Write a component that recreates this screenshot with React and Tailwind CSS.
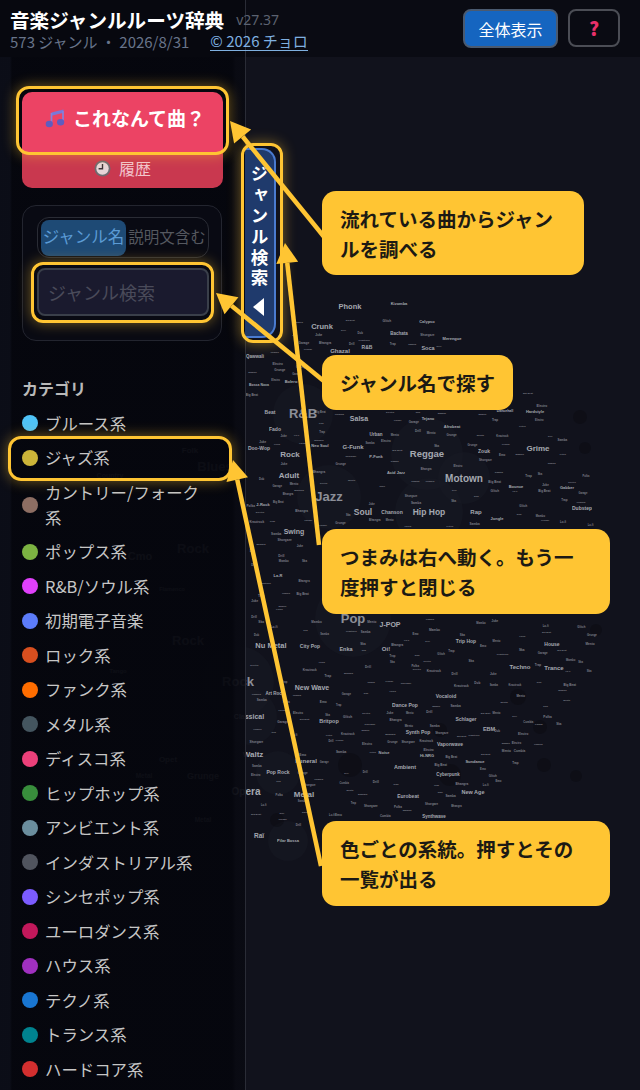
const font = '"Noto Sans CJK JP", "Noto Sans", sans-serif';

const categories = [
  ['ブルース系', 'bg-[#4fc3f7]'],
  ['ジャズ系', 'bg-[#cdb539]'],
  ['カントリー/フォーク系', 'bg-[#8d6e63]'],
  ['ポップス系', 'bg-[#7cb342]'],
  ['R&B/ソウル系', 'bg-[#e040fb]'],
  ['初期電子音楽', 'bg-[#5c7cfa]'],
  ['ロック系', 'bg-[#d84f1f]'],
  ['ファンク系', 'bg-[#ff6d00]'],
  ['メタル系', 'bg-[#44555f]'],
  ['ディスコ系', 'bg-[#ec407a]'],
  ['ヒップホップ系', 'bg-[#388e3c]'],
  ['アンビエント系', 'bg-[#6b8e9e]'],
  ['インダストリアル系', 'bg-[#50545e]'],
  ['シンセポップ系', 'bg-[#7c5cff]'],
  ['ユーロダンス系', 'bg-[#c2185b]'],
  ['ハウス系', 'bg-[#a030c0]'],
  ['テクノ系', 'bg-[#1976d2]'],
  ['トランス系', 'bg-[#00838f]'],
  ['ハードコア系', 'bg-[#d32f2f]'],
];

// name, center x, center y, font size
const genres = [
  ['Phonk', 350, 307, 7.5], ['Kizomba', 399, 304, 4], ['Calypso', 427, 322, 4], ['Crunk', 322, 327, 7.5],
  ['Bachata', 399, 334, 4.5], ['Merengue', 452, 339, 4], ['Ghazal', 340, 351, 6], ['R&B', 367, 348, 5],
  ['Soca', 428, 348, 5.5], ['Qawwali', 255, 357, 4.5], ['Bolero', 291, 382, 4], ['Bossa Nova', 259, 386, 3.5],
  ['R&B', 303, 414, 13], ['Beat', 270, 413, 5], ['Salsa', 359, 419, 7], ['Fado', 275, 430, 5],
  ['Urban', 376, 435, 4.5], ['Doo-Wop', 259, 449, 5], ['Rock', 290, 455, 8], ['G-Funk', 353, 447, 6],
  ['Neo Soul', 320, 446, 4], ['Reggae', 427, 454, 9.5], ['Adult', 289, 476, 8], ['Zouk', 484, 452, 5],
  ['Grime', 538, 449, 8], ['Motown', 464, 478, 10], ['Jazz', 329, 497, 13], ['Soul', 363, 512, 8.5],
  ['Chanson', 392, 513, 5], ['Hip Hop', 429, 512, 8.5], ['Rap', 476, 512, 6], ['Swing', 294, 532, 7],
  ['Dubstep', 582, 509, 5], ['Bounce', 516, 487, 4], ['Gabber', 567, 488, 4], ['Hardstyle', 535, 412, 4],
  ['Afrobeat', 452, 427, 4], ['Tejano', 428, 419, 4], ['Dancehall', 505, 412, 3.5], ['Jungle', 497, 519, 4],
  ['P-Funk', 376, 457, 4], ['Acid Jazz', 396, 473, 4], ['J-Rock', 263, 505, 4], ['La-R', 278, 576, 4],
  ['Pop', 353, 619, 13], ['J-POP', 390, 625, 7], ['Nu Metal', 271, 646, 7.5], ['City Pop', 310, 647, 5],
  ['Enka', 346, 649, 5.5], ['Oi!', 386, 649, 6], ['New Wave', 312, 688, 7], ['Art Rock', 275, 694, 4.5],
  ['Trip Hop', 466, 642, 5], ['House', 552, 645, 5], ['Techno', 520, 667, 6], ['Trance', 554, 668, 6],
  ['Vocaloid', 446, 697, 5], ['Dance Pop', 405, 706, 5], ['Britpop', 329, 721, 5.5], ['Schlager', 466, 720, 5],
  ['EBM', 489, 729, 5.5], ['Synth Pop', 418, 733, 5], ['Vaporwave', 450, 745, 5], ['Waltz', 253, 755, 8],
  ['Ambient', 405, 767, 5.5], ['Hi-NRG', 427, 756, 4], ['Sundance', 475, 762, 4], ['Noise', 384, 753, 4],
  ['Cyberpunk', 448, 775, 4.5], ['New Age', 473, 792, 5.5], ['Eurobeat', 408, 797, 5], ['Synthwave', 434, 817, 4.5],
  ['Pop Rock', 278, 773, 5], ['Metal', 304, 795, 8], ['Opera', 246, 791, 10], ['Classical', 249, 717, 7],
  ['Rock', 238, 682, 13], ['Raï', 259, 836, 6.5], ['Pilar Bossa', 288, 841, 4], ['Funeral', 306, 761, 6],
  ['Blues', 215, 467, 13], ['Folk', 190, 451, 8], ['Country', 110, 476, 7], ['Rock', 193, 549, 13],
  ['Cmo', 140, 556, 11], ['Rock', 188, 641, 13], ['Grunge', 203, 777, 9], ['Metal', 203, 820, 6.5],
  ['Metal', 144, 776, 6.5], ['Opet', 168, 760, 8], ['Flamenco', 172, 589, 5.5], ['Tango', 118, 671, 6],
];

const tinyNames = ['Lo-fi', 'Ska', 'Dub', 'Emo', 'Trap', 'Drill', 'Samba', 'Mambo', 'Polka', 'Glitch', 'Grunge', 'Garage', 'Krautrock', 'Shoegaze', 'Bhangra', 'Cumbia', 'Mento', 'Juke', 'Electro', 'Big Beat'];

const blocked = [
  [322, 191, 584, 275],
  [322, 355, 513, 410],
  [322, 529, 610, 614],
  [322, 821, 610, 906],
  [241, 143, 283, 343],
];

const boxOf = (name, x, y, size) => {
  const w = (name.length * size * 0.56) / 2;
  const h = size * 0.65;
  return [x - w, y - h, x + w, y + h];
};
const hits = (a, b) => a[0] < b[2] && b[0] < a[2] && a[1] < b[3] && b[1] < a[3];

// small labels scattered over the disc, kept clear of everything else
const makeTiny = () => {
  const out = [];
  const taken = [...blocked, ...genres.map(([n, x, y, s]) => boxOf(n, x, y, s))];
  let seed = 37;
  const next = () => {
    seed = (seed * 1103 + 12345) % 65536;
    return seed / 65536;
  };
  for (let y = 300; y < 850; y += 10) {
    for (let x = 250; x < 610; x += 22) {
      const px = x + next() * 16;
      const py = y + next() * 7;
      const name = tinyNames[Math.floor(next() * tinyNames.length)];
      const size = 2.2 + next() * 1;
      const box = boxOf(name, px, py, size);
      const inDisc = (px - 350) ** 2 + (py - 575) ** 2 < 258 ** 2;
      if (inDisc && next() > 0.3 && !taken.some((b) => hits(b, box))) {
        taken.push(box);
        out.push([name, px, py, size]);
      }
    }
  }
  return out;
};
const tiny = makeTiny();

const bubbles = [
  [427, 454, 36], [329, 497, 32], [429, 512, 34], [353, 619, 38], [303, 414, 30], [464, 478, 26],
  [238, 682, 36], [249, 717, 28], [278, 773, 22], [288, 841, 20],
];
const darkSpots = [
  [518, 697, 8], [540, 727, 7], [450, 775, 11], [350, 765, 12], [277, 820, 7],
  [596, 630, 6], [440, 730, 7], [544, 765, 7], [576, 776, 6], [580, 417, 7], [585, 448, 6],
];

function GenreMap() {
  return (
    <div className="absolute inset-0 font-bold" style={{ fontFamily: '"Liberation Sans", sans-serif' }}>
      {bubbles.map(([x, y, r], i) => (
        <div
          key={i}
          className="absolute rounded-full bg-[#181924]/50"
          style={{ left: x - r, top: y - r, width: r * 2, height: r * 2 }}
        />
      ))}
      {darkSpots.map(([x, y, r], i) => (
        <div
          key={i}
          className="absolute rounded-full bg-[#090a10]/40"
          style={{ left: x - r, top: y - r, width: r * 2, height: r * 2 }}
        />
      ))}
      {tiny.map(([name, x, y, size], i) => (
        <span
          key={i}
          className="absolute -translate-x-1/2 -translate-y-1/2 whitespace-nowrap text-[#7d7f88]"
          style={{ left: x, top: y, fontSize: size }}
        >
          {name}
        </span>
      ))}
      {genres.map(([name, x, y, size], i) => (
        <span
          key={i}
          className="absolute -translate-x-1/2 -translate-y-1/2 whitespace-nowrap text-[#c4c8d0]"
          style={{ left: x, top: y, fontSize: size, opacity: size >= 13 ? 0.68 : 0.82 }}
        >
          {name}
        </span>
      ))}
    </div>
  );
}

function NoteIcon() {
  return (
    <svg width="21" height="21" viewBox="0 0 21 21" className="shrink-0">
      <path d="M6.5 4.5 L18.5 1.5 V4.8 L6.5 7.8 Z" fill="#7a78d8" />
      <path d="M6.5 5 V15.5 M18 3 V13.5" stroke="#8482dc" strokeWidth="1.7" />
      <ellipse cx="4.3" cy="16" rx="3.6" ry="3.2" fill="#5f5cc0" />
      <ellipse cx="15.6" cy="14.2" rx="3.6" ry="3.2" fill="#5f5cc0" />
    </svg>
  );
}

function ClockIcon() {
  return (
    <svg width="17" height="17" viewBox="0 0 17 17" className="shrink-0">
      <circle cx="8.5" cy="8.5" r="8" fill="#6e6a70" />
      <circle cx="8.5" cy="8.5" r="6.2" fill="#e6d5d8" />
      <path d="M8.5 4 V8.7 H4.6" stroke="#3a3438" strokeWidth="1.4" fill="none" />
    </svg>
  );
}

function Header() {
  return (
    <header className="relative flex h-[57px] bg-[#0a0b13]">
      <div className="w-[246px] shrink-0 border-r border-[#2a2c36] bg-[#07080f] pl-[10px] pt-[7px]">
        <div className="flex h-[25px] w-[300px] items-center">
          <span className="text-[19.6px] leading-[25px] font-bold whitespace-nowrap text-white">音楽ジャンルルーツ辞典</span>
          <span className="ml-[12px] text-[14px] leading-[18px] text-[#5c6270]" style={{ fontFamily: '"Noto Sans", sans-serif' }}>v27.37</span>
        </div>
        <div className="flex w-[310px] items-center text-[15px] leading-[18px] whitespace-nowrap text-[#68748a]">
          <span>573 ジャンル ・ 2026/8/31</span>
          <a className="ml-[21px] border-b border-[#7fb0e0] text-[#7fb0e0]">© 2026 チョロ</a>
        </div>
      </div>
      <div className="flex flex-1 items-start justify-end gap-[10px] pr-[20px] pt-[9px]">
        <button className="h-[39px] w-[95px] rounded-[8px] border-2 border-[#4a5a70] bg-[#1565c0] text-[16px] text-white">全体表示</button>
        <button className="h-[38px] w-[52px] rounded-[8px] border-2 border-[#4b4d55] bg-[#0a0b13] text-[19px] font-black text-[#e8306a]">?</button>
      </div>
    </header>
  );
}

function Sidebar() {
  return (
    <aside className="relative h-[1033px] w-[246px] shrink-0 border-r border-[#2a2c36] bg-[linear-gradient(90deg,rgba(11,13,23,0.96)_0,rgba(11,13,23,0.96)_10px,rgba(5,6,13,0.95)_12px,rgba(5,6,13,0.95)_232px,rgba(9,10,18,0.93)_236px)] pl-[22px] pt-[35px]">
      <button className="flex h-[60px] w-[201px] items-center gap-[7px] rounded-t-[10px] bg-[#ec4364] pb-[7px] pl-[23px] text-[19px] font-bold whitespace-nowrap text-white">
        <NoteIcon />
        <span>これなんて曲？</span>
      </button>
      <button className="flex h-[36px] w-[201px] items-center justify-center gap-[8px] rounded-b-[10px] bg-[#c9384f] pb-[4px] text-[16px] text-[#f2c6ce]">
        <ClockIcon />
        <span>履歴</span>
      </button>

      <div className="mt-[17px] h-[136px] w-[200px] rounded-[14px] border border-[#23252f] bg-[#090a13] pl-[14px] pt-[11px]">
        <div className="flex h-[41px] w-[172px] items-center rounded-[12px] border border-[#2a2c35] pl-[3px]">
          <span className="flex h-[36px] w-[85px] items-center justify-center rounded-[8px] bg-[#1e4a75] pb-[2px] text-[16.5px] whitespace-nowrap text-[#5b9bd5]">ジャンル名</span>
          <span className="w-[82px] pb-[2px] text-center text-[15.5px] whitespace-nowrap text-[#55585f]">説明文含む</span>
        </div>
        <input
          placeholder="ジャンル検索"
          className="mt-[10px] h-[48px] w-[172px] rounded-[8px] border-2 border-[#3a3f4a] bg-[#1a1a2e] pl-[9px] text-[18px] outline-none placeholder:text-[#4a4b5a]"
        />
      </div>

      <h2 className="mt-[36px] text-[16px] leading-[22px] font-bold text-[#b9b9b9]">カテゴリ</h2>
      <ul className="mt-[7px] w-[190px]">
        {categories.map(([name, color]) => (
          <li key={name} className="flex items-center gap-[7px] py-[4.75px] text-[16.4px] leading-[25px] text-[#c6c6c6]">
            <span className={`h-[16px] w-[16px] shrink-0 rounded-full ${color}`} />
            <span className="w-[160px]">{name}</span>
          </li>
        ))}
      </ul>
    </aside>
  );
}

// line with a triangular head, tip at (x2, y2)
function Arrow({ x1, y1, x2, y2 }) {
  const len = Math.hypot(x2 - x1, y2 - y1);
  const ux = (x2 - x1) / len;
  const uy = (y2 - y1) / len;
  const bx = x2 - ux * 20;
  const by = y2 - uy * 20;
  const head = `${x2},${y2} ${bx - uy * 11},${by + ux * 11} ${bx + uy * 11},${by - ux * 11}`;
  return (
    <g>
      <line x1={x1} y1={y1} x2={bx} y2={by} stroke="#ffc533" strokeWidth="4.5" />
      <polygon points={head} fill="#ffc533" />
    </g>
  );
}

function Callout({ className, children }) {
  return (
    <div className={`absolute rounded-[14px] bg-[#ffc533] pl-[18px] text-[19.5px] leading-[30px] font-bold text-[#1c1a14] ${className}`}>
      {children}
    </div>
  );
}

function Ring({ className }) {
  return (
    <div className={`absolute border-[3px] border-[#ffc533] shadow-[0_0_14px_rgba(255,197,51,0.45)] ${className}`} />
  );
}

function Annotations() {
  return (
    <>
      {/* search handle */}
      <div className="absolute left-[245px] top-[148px] flex h-[190px] w-[31px] flex-col items-center rounded-r-[14px] border-y-2 border-r-2 border-[#4a7bd0] bg-[#1f3a6c] pt-[15px] text-white">
        <span className="text-[17.5px] leading-[21px] font-bold tracking-[3.3px] [writing-mode:vertical-rl]">ジャンル検索</span>
        <span className="mt-[8px] mr-[3px] h-0 w-0 border-y-[9px] border-r-[11px] border-y-transparent border-r-white" />
      </div>

      <Ring className="left-[16px] top-[86px] h-[69px] w-[213px] rounded-[13px]" />
      <Ring className="left-[241px] top-[143px] h-[200px] w-[42px] rounded-[12px]" />
      <Ring className="left-[31px] top-[262px] h-[61px] w-[183px] rounded-[12px]" />
      <Ring className="left-[8px] top-[436px] h-[45px] w-[224px] rounded-[13px]" />

      <svg className="absolute inset-0" width="640" height="1090">
        <Arrow x1={325} y1={238} x2={230} y2={121} />
        <Arrow x1={325} y1={382} x2={216} y2={293} />
        <Arrow x1={319} y1={545} x2={285} y2={243} />
        <Arrow x1={321} y1={866} x2={233} y2={460} />
      </svg>

      <Callout className="left-[322px] top-[191px] h-[84px] w-[262px] pt-[13px]">流れている曲からジャン<br />ルを調べる</Callout>
      <Callout className="left-[322px] top-[355px] h-[55px] w-[191px] pt-[13px]">ジャンル名で探す</Callout>
      <Callout className="left-[322px] top-[529px] h-[85px] w-[288px] pt-[13px]">つまみは右へ動く。もう一<br />度押すと閉じる</Callout>
      <Callout className="left-[322px] top-[821px] h-[85px] w-[288px] pt-[13px]">色ごとの系統。押すとその<br />一覧が出る</Callout>
    </>
  );
}

export default function App() {
  return (
    <div className="relative h-[1090px] w-[640px] overflow-hidden bg-[#11121c]" style={{ fontFamily: font }}>
      <GenreMap />
      <Header />
      <Sidebar />
      <Annotations />
    </div>
  );
}
